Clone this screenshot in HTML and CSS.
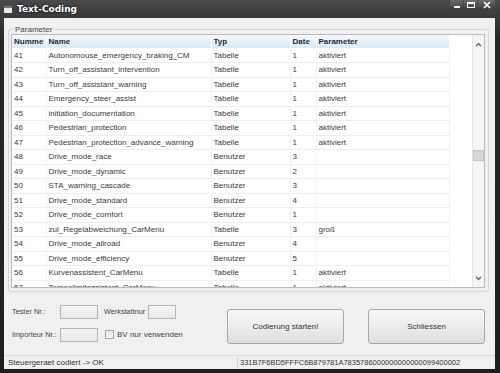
FILE: index.html
```html
<!DOCTYPE html>
<html lang="de">
<head>
    <meta charset="UTF-8">
    <title>Text-Coding</title>
    <link rel="stylesheet" href="styles.css">
</head>
<body>

    <div class="window">
        <div class="titlebar">
            <span class="app-icon"></span>
            <span class="title">Text-Coding</span>
            <div class="caption-btns">
                <span class="cap-btn">
                    <svg width="10" height="8" viewBox="0 0 10 8"><rect x="2" y="5" width="6" height="2" fill="#fff"/></svg>
                </span>
                <span class="cap-btn">
                    <svg width="10" height="8" viewBox="0 0 10 8"><rect x="1.5" y="1.5" width="7" height="5" fill="none" stroke="#fff" stroke-width="1"/><rect x="1.5" y="1.5" width="7" height="1.5" fill="#fff"/></svg>
                </span>
                <span class="cap-btn close">
                    <svg width="10" height="8" viewBox="0 0 10 8"><path d="M2 1 L8 7 M8 1 L2 7" stroke="#fff" stroke-width="1.6"/></svg>
                </span>
            </div>
        </div>

        <div class="client">
            <fieldset class="group">
                <legend>Parameter</legend>
                <div class="grid-box">
                    <div class="grid-view">
                        <table class="grid">
                            <colgroup>
                                <col style="width:34px">
                                <col style="width:165px">
                                <col style="width:79px">
                                <col style="width:26px">
                                <col style="width:133px">
                                <col>
                            </colgroup>
                            <thead>
                                <tr>
                                    <th>Numme</th>
                                    <th>Name</th>
                                    <th>Typ</th>
                                    <th>Date</th>
                                    <th>Parameter</th>
                                    <th class="blank"></th>
                                </tr>
                            </thead>
                            <tbody id="rows"></tbody>
                        </table>
                    </div>
                    <div class="scrollbar">
                        <span class="arrow">
                            <svg width="7" height="5" viewBox="0 0 7 5"><path d="M1 4 L3.5 1.5 L6 4" fill="none" stroke="#555" stroke-width="1.2"/></svg>
                        </span>
                        <div class="track"><span class="thumb"></span></div>
                        <span class="arrow">
                            <svg width="7" height="5" viewBox="0 0 7 5"><path d="M1 1 L3.5 3.5 L6 1" fill="none" stroke="#555" stroke-width="1.2"/></svg>
                        </span>
                    </div>
                </div>
            </fieldset>

            <div class="bottom">
                <div class="fields">
                    <div class="field-row">
                        <label class="lbl">Tester Nr.:</label>
                        <span class="input wide"></span>
                        <label class="lbl mid">Werkstattnur</label>
                        <span class="input small"></span>
                    </div>
                    <div class="field-row">
                        <label class="lbl">Importeur Nr.:</label>
                        <span class="input wide"></span>
                        <span class="checkbox"></span>
                        <label class="lbl chk">BV nur verwenden</label>
                    </div>
                </div>
                <button class="btn start">Codierung starten!</button>
                <button class="btn close-btn">Schliessen</button>
            </div>

            <div class="statusbar">
                <span class="status-left">Steuergeraet codiert -&gt; OK</span>
                <span class="status-right">331B7F6BD5FFFC6B879781A7835786000000000000099400002</span>
            </div>
        </div>
    </div>

    <script>
        // rows of the coding list
        const data = [
            ['41', 'Autonomouse_emergency_braking_CM', 'Tabelle', '1', 'aktiviert'],
            ['42', 'Turn_off_assistant_intervention', 'Tabelle', '1', 'aktiviert'],
            ['43', 'Turn_off_assistant_warning', 'Tabelle', '1', 'aktiviert'],
            ['44', 'Emergency_steer_assist', 'Tabelle', '1', 'aktiviert'],
            ['45', 'initiation_documentation', 'Tabelle', '1', 'aktiviert'],
            ['46', 'Pedestrian_protection', 'Tabelle', '1', 'aktiviert'],
            ['47', 'Pedestrian_protection_advance_warning', 'Tabelle', '1', 'aktiviert'],
            ['48', 'Drive_mode_race', 'Benutzer', '3', ''],
            ['49', 'Drive_mode_dynamic', 'Benutzer', '2', ''],
            ['50', 'STA_warning_cascade', 'Benutzer', '3', ''],
            ['51', 'Drive_mode_standard', 'Benutzer', '4', ''],
            ['52', 'Drive_mode_comfort', 'Benutzer', '1', ''],
            ['53', 'zul_Regelabweichung_CarMenu', 'Tabelle', '3', 'groß'],
            ['54', 'Drive_mode_allroad', 'Benutzer', '4', ''],
            ['55', 'Drive_mode_efficiency', 'Benutzer', '5', ''],
            ['56', 'Kurvenassistent_CarMenu', 'Tabelle', '1', 'aktiviert'],
            ['57', 'Tempolimitassistent_CarMenu', 'Tabelle', '1', 'aktiviert']
        ];

        const tbody = document.getElementById('rows');
        data.forEach(row => {
            const tr = document.createElement('tr');
            row.forEach(val => {
                const td = document.createElement('td');
                td.textContent = val;
                tr.appendChild(td);
            });
            tr.appendChild(document.createElement('td'));
            tbody.appendChild(tr);
        });
    </script>

</body>
</html>
```

FILE: styles.css
```css
* {
    box-sizing: border-box;
}
body {
    margin: 0;
    font-family: "Liberation Sans", Arial, sans-serif;
    font-size: 8px;
    color: #333;
    background-color: #1c1c1c;
}
.window {
    width: 500px;
    height: 373px;
    background: linear-gradient(#4a4a4a, #262626 40px, #1e1e1e);
    padding: 0 5px 4px 4px;
    display: flex;
    flex-direction: column;
}
.titlebar {
    height: 18px;
    display: flex;
    align-items: center;
    flex-shrink: 0;
}
.app-icon {
    width: 8px;
    height: 7px;
    background-color: #e8e8e8;
    border-top: 2px solid #777;
    margin: 0 5px 0 0;
}
.title {
    color: #fff;
    font-family: "DejaVu Sans", sans-serif;
    font-weight: bold;
    font-size: 9px;
    text-shadow: 0 0 3px #000;
}
.caption-btns {
    margin-left: auto;
    align-self: flex-start;
    display: flex;
    gap: 1px;
}
.cap-btn {
    width: 13px;
    height: 10px;
    display: flex;
    align-items: center;
    justify-content: center;
    background: linear-gradient(#6a6a6a, #3a3a3a);
    border-radius: 0 0 2px 2px;
}
.cap-btn.close {
    width: 17px;
}
.client {
    flex: 1;
    background-color: #f0f0f0;
    display: flex;
    flex-direction: column;
    min-height: 0;
}
.group {
    margin: 7px 6px 0 4px;
    padding: 0 3px 1px 2px;
    border: 1px solid #d0d6dc;
    border-radius: 3px;
    height: 267px;
    min-width: 0;
}
.group legend {
    padding: 0 2px;
    margin-left: 2px;
    color: #444;
    font-size: 8px;
}
.grid-box {
    display: flex;
    height: 254px;
    border: 1px solid #b8bcc2;
    background-color: #fff;
}
.grid-view {
    flex: 1;
    overflow: hidden;
    min-width: 0;
}
.grid {
    width: 100%;
    border-collapse: collapse;
    table-layout: fixed;
}
.grid th {
    height: 13px;
    text-align: left;
    font-weight: bold;
    color: #1d2b3a;
    padding: 0 2px;
    background: linear-gradient(#f5f9fd, #dbe8f5);
    border-right: 1px solid #fff;
    white-space: nowrap;
    overflow: hidden;
}
.grid th.blank {
    background: #fff;
}
.grid td {
    height: 14.5px;
    padding: 0 2px;
    border-bottom: 1px solid #eeeeee;
    border-right: 1px solid #f3f3f3;
    white-space: nowrap;
    overflow: hidden;
    color: #3a3a3a;
}
.grid td:last-child {
    border: none;
}
.scrollbar {
    width: 12px;
    margin-left: 12px;
    background-color: #f5f5f5;
    border-left: 1px solid #e6e6e6;
    display: flex;
    flex-direction: column;
}
.arrow {
    height: 12px;
    display: flex;
    align-items: center;
    justify-content: center;
    margin-top: 3px;
}
.arrow:last-child {
    margin: 0 0 3px 0;
}
.track {
    flex: 1;
}
.thumb {
    display: block;
    margin-top: 100px;
    height: 11px;
    background-color: #d4d6d8;
    border: 1px solid #c4c6c8;
}
.bottom {
    display: flex;
    align-items: center;
    padding: 0 10px 0 8px;
    height: 60px;
}
.fields {
    display: flex;
    flex-direction: column;
    gap: 9px;
    width: 215px;
    margin-top: 2px;
}
.field-row {
    display: flex;
    align-items: center;
}
.lbl {
    color: #444;
    width: 48px;
    font-size: 7.3px;
    white-space: nowrap;
    flex-shrink: 0;
}
.lbl.mid {
    width: 44px;
    margin-left: 6px;
}
.lbl.chk {
    width: auto;
    font-size: 8px;
    margin-left: 3px;
}
.input {
    height: 14px;
    flex-shrink: 0;
    border: 1px solid #b4b4b4;
    background: linear-gradient(#f4f4f4, #e8e8e8);
}
.input.wide {
    width: 38px;
}
.input.small {
    width: 28px;
}
.checkbox {
    width: 9px;
    height: 9px;
    flex-shrink: 0;
    margin-left: 7px;
    border: 1px solid #a8a8a8;
    background: linear-gradient(#e6e6e6, #f6f6f6);
}
.btn {
    width: 117px;
    height: 35px;
    font-family: "Liberation Sans", Arial, sans-serif;
    font-size: 8px;
    color: #333;
    border: 1px solid #a8a8a8;
    border-radius: 3px;
    background: linear-gradient(#f8f8f8, #ececec 50%, #dedede);
    margin-top: 8px;
}
.btn.close-btn {
    margin-left: 24px;
}
.statusbar {
    margin-top: auto;
    height: 14px;
    display: flex;
    align-items: center;
    border-top: 1px solid #dcdcdc;
    color: #333;
}
.status-left {
    width: 234px;
    padding-left: 4px;
    border-right: 1px solid #d0d0d0;
}
.status-right {
    padding-left: 2px;
    font-size: 7.5px;
}
```
